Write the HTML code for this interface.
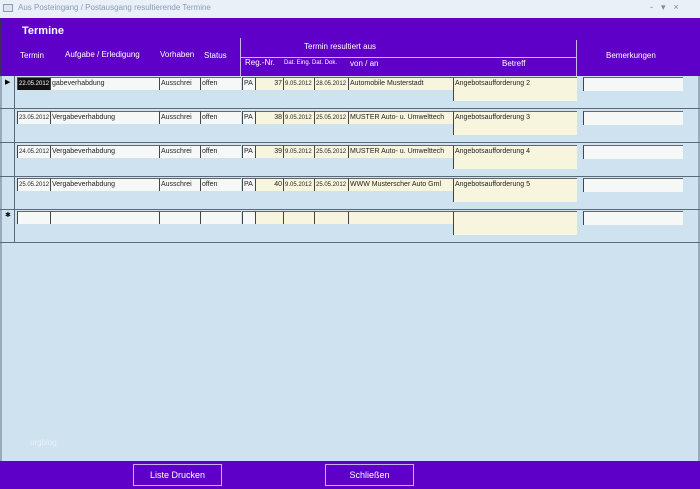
<!DOCTYPE html>
<html><head><style>
*{margin:0;padding:0;box-sizing:border-box}
body{width:700px;height:489px;position:relative;overflow:hidden;background:#cfe2f0;font-family:"Liberation Sans",sans-serif}
.a{position:absolute}
.t{color:#fff;font-size:8px;position:absolute;white-space:nowrap}
.f{position:absolute;height:13px;background:#f6f8f8;border-left:1px solid #444;border-top:1px solid #666;font-size:7px;line-height:12px;padding-left:1px;color:#222;white-space:nowrap;overflow:hidden}
.y{background:#f8f5de}
.row{position:absolute;left:0;width:700px;height:34px;border-bottom:1px solid #5a6a7a}
</style></head><body>
<div class="a" style="left:0;top:0;width:700px;height:18px;background:#eaf0f7"></div>
<div class="a" style="left:3px;top:4px;width:10px;height:8px;border:1px solid #8a9ab0;background:#dde6f0"></div>
<div class="a" style="left:18px;top:3px;font-size:8px;color:#8a9ab8">Aus Posteingang / Postausgang resultierende Termine</div>
<div class="a" style="left:650px;top:2px;font-size:9px;color:#7a8aa0;letter-spacing:8px">-▾×</div>
<div class="a" style="left:0;top:18px;width:700px;height:58px;background:#5e00c8;border-left:2px solid #3a2a60"></div>
<div class="t" style="left:22px;top:25px;font-size:11px;font-weight:bold">Termine</div>
<div class="t" style="left:20px;top:51px">Termin</div>
<div class="t" style="left:65px;top:50px">Aufgabe / Erledigung</div>
<div class="t" style="left:160px;top:50px">Vorhaben</div>
<div class="t" style="left:204px;top:51px">Status</div>
<div class="a" style="left:240px;top:38px;width:1px;height:38px;background:#c8b8f0"></div>
<div class="a" style="left:576px;top:40px;width:1px;height:36px;background:#c8b8f0"></div>
<div class="a" style="left:240px;top:57px;width:337px;height:1px;background:#c8b8f0"></div>
<div class="t" style="left:304px;top:42px">Termin resultiert aus</div>
<div class="t" style="left:245px;top:58px;font-size:8px">Reg.-Nr.</div>
<div class="t" style="left:284px;top:60px;font-size:6px">Dat. Eing. Dat. Dok.</div>
<div class="t" style="left:350px;top:59px">von / an</div>
<div class="t" style="left:502px;top:59px">Betreff</div>
<div class="t" style="left:606px;top:51px">Bemerkungen</div>
<div class="a" style="left:14px;top:76px;width:1px;height:167px;background:#5a6a7a"></div>
<div class="a" style="left:0;top:76px;width:2px;height:385px;background:#9ab"></div>
<div class="a" style="left:698px;top:76px;width:2px;height:385px;background:#9ab"></div>

<div class="row" style="top:75px"></div>
<div class="row" style="top:109px"></div>
<div class="row" style="top:143px"></div>
<div class="row" style="top:176px"></div>
<div class="row" style="top:209px"></div>
<div class="a" style="left:5px;top:78px;font-size:7px">▶</div>
<div class="a" style="left:5px;top:211px;font-size:7px">✱</div>

<!-- rows generated inline -->
<div id="r"></div>
<script>
var rows=[["22.05.2012","gabeverhabdung","37","9.05.2012","28.05.2012","Automobile Musterstadt","Angebotsaufforderung 2"],
["23.05.2012","Vergabeverhabdung","38","9.05.2012","25.05.2012","MUSTER Auto- u. Umwelttech","Angebotsaufforderung 3"],
["24.05.2012","Vergabeverhabdung","39","9.05.2012","25.05.2012","MUSTER Auto- u. Umwelttech","Angebotsaufforderung 4"],
["25.05.2012","Vergabeverhabdung","40","9.05.2012","25.05.2012","WWW Musterscher Auto Gml","Angebotsaufforderung 5"],
["","","","","","",""]];
var h="",tops=[77,111,145,178,211];
rows.forEach(function(r,i){var y=tops[i];
function f(x,w,t,c,hh,st){h+='<div class="f '+(c||'')+'" style="left:'+x+'px;top:'+y+'px;width:'+w+'px;'+(hh?'height:'+hh+'px;':'')+(st||'')+'">'+t+'</div>';}
f(17,33,r[0],'', 0, i==0?'background:#111;color:#fff;font-size:6px':'font-size:6px');
f(50,109,r[1]);f(159,41,i<4?'Ausschrei':'');f(200,41,i<4?'offen':'');
f(242,13,i<4?'PA':'');f(255,28,r[2],'y',0,'text-align:right;padding-right:1px');
f(283,31,r[3],'y',0,'font-size:6px');f(314,34,r[4],'y',0,'font-size:6px');
f(348,105,r[5],'y');f(453,124,r[6],'y',24);f(583,100,'','',14);});
document.getElementById('r').innerHTML=h;
</script>
<div class="a" style="left:30px;top:438px;font-size:8px;color:#e8f0f8">urgblog</div>
<div class="a" style="left:0;top:461px;width:700px;height:28px;background:#5e00c8;border-top:1px solid #3a2a60"></div>
<div class="a" style="left:133px;top:464px;width:89px;height:22px;border:1px solid #c8b0f0;color:#fff;font-size:9px;text-align:center;line-height:20px">Liste Drucken</div>
<div class="a" style="left:325px;top:464px;width:89px;height:22px;border:1px solid #c8b0f0;color:#fff;font-size:9px;text-align:center;line-height:20px">Schließen</div>
</body></html>
